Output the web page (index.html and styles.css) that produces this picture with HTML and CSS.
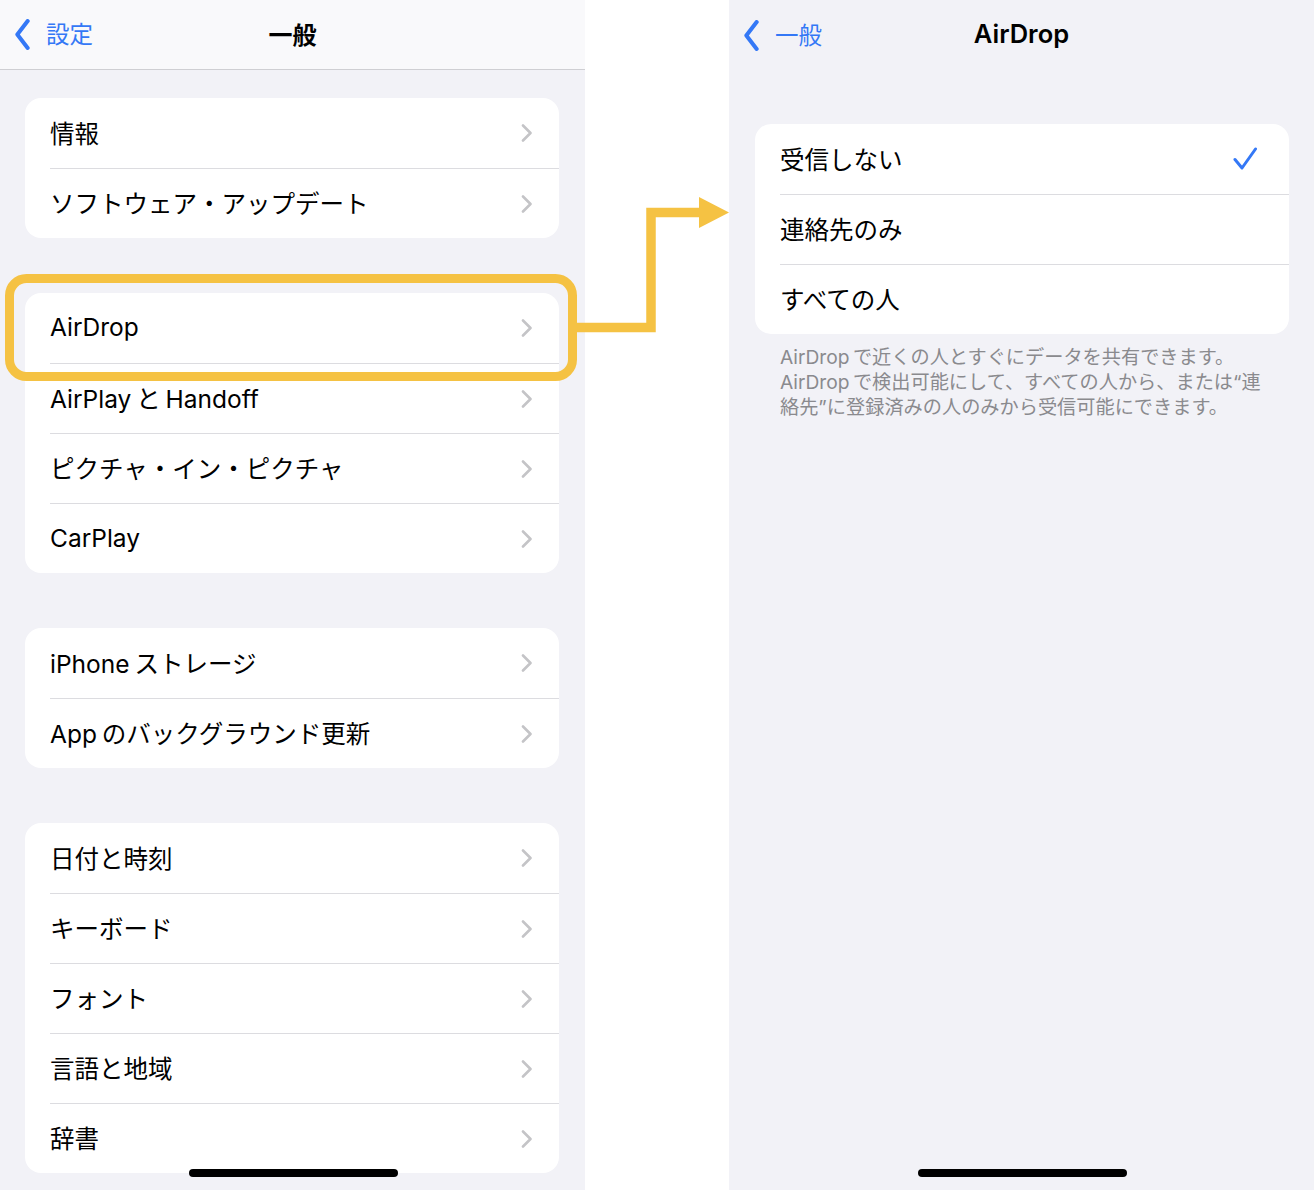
FILE: index.html
```html
<!DOCTYPE html>
<html lang="ja">
<head>
<meta charset="utf-8"/>
<title>一般 → AirDrop</title>
<link rel="stylesheet" href="styles.css">
</head>
<body>
<div class="page">

  <!-- Left: 一般 -->
  <div class="panel">
    <div class="navbar bordered">
      <a class="back"><svg class="back-ico" viewBox="0 0 16 30"><path d="M13 2 L3 15 L13 28"/></svg><span>設定</span></a>
      <div class="nav-title">一般</div>
      <div></div>
    </div>

    <div class="group">
      <div class="row"><span>情報</span><svg class="chev" viewBox="0 0 12 18"><path d="M2 1.5 L9.5 9 L2 16.5"/></svg></div>
      <div class="row"><span>ソフトウェア・アップデート</span><svg class="chev" viewBox="0 0 12 18"><path d="M2 1.5 L9.5 9 L2 16.5"/></svg></div>
    </div>

    <div class="group">
      <div class="row"><span>AirDrop</span><svg class="chev" viewBox="0 0 12 18"><path d="M2 1.5 L9.5 9 L2 16.5"/></svg></div>
      <div class="row"><span>AirPlay と Handoff</span><svg class="chev" viewBox="0 0 12 18"><path d="M2 1.5 L9.5 9 L2 16.5"/></svg></div>
      <div class="row"><span>ピクチャ・イン・ピクチャ</span><svg class="chev" viewBox="0 0 12 18"><path d="M2 1.5 L9.5 9 L2 16.5"/></svg></div>
      <div class="row"><span>CarPlay</span><svg class="chev" viewBox="0 0 12 18"><path d="M2 1.5 L9.5 9 L2 16.5"/></svg></div>
    </div>

    <div class="group">
      <div class="row"><span>iPhone ストレージ</span><svg class="chev" viewBox="0 0 12 18"><path d="M2 1.5 L9.5 9 L2 16.5"/></svg></div>
      <div class="row"><span>App のバックグラウンド更新</span><svg class="chev" viewBox="0 0 12 18"><path d="M2 1.5 L9.5 9 L2 16.5"/></svg></div>
    </div>

    <div class="group">
      <div class="row"><span>日付と時刻</span><svg class="chev" viewBox="0 0 12 18"><path d="M2 1.5 L9.5 9 L2 16.5"/></svg></div>
      <div class="row"><span>キーボード</span><svg class="chev" viewBox="0 0 12 18"><path d="M2 1.5 L9.5 9 L2 16.5"/></svg></div>
      <div class="row"><span>フォント</span><svg class="chev" viewBox="0 0 12 18"><path d="M2 1.5 L9.5 9 L2 16.5"/></svg></div>
      <div class="row"><span>言語と地域</span><svg class="chev" viewBox="0 0 12 18"><path d="M2 1.5 L9.5 9 L2 16.5"/></svg></div>
      <div class="row"><span>辞書</span><svg class="chev" viewBox="0 0 12 18"><path d="M2 1.5 L9.5 9 L2 16.5"/></svg></div>
    </div>

    <div class="home-bar"></div>
  </div>

  <div class="spacer"></div>

  <!-- Right: AirDrop -->
  <div class="panel">
    <div class="navbar">
      <a class="back"><svg class="back-ico" viewBox="0 0 16 30"><path d="M13 2 L3 15 L13 28"/></svg><span>一般</span></a>
      <div class="nav-title latin">AirDrop</div>
      <div></div>
    </div>

    <div class="group airdrop">
      <div class="row"><span>受信しない</span><svg class="check" viewBox="0 0 24 24"><path d="M2 12.5 L9 21 L22.5 2"/></svg></div>
      <div class="row"><span>連絡先のみ</span></div>
      <div class="row"><span>すべての人</span></div>
    </div>
    <p class="footnote">AirDrop で近くの人とすぐにデータを共有できます。<br>AirDrop で検出可能にして、すべての人から、または“連<br>絡先”に登録済みの人のみから受信可能にできます。</p>

    <div class="home-bar"></div>
  </div>

  <!-- Annotation -->
  <svg class="annotation" width="1314" height="1190" viewBox="0 0 1314 1190">
    <rect x="9.5" y="278.5" width="563" height="98" rx="17" fill="none" stroke="#f5c243" stroke-width="9"/>
    <path d="M572 327.5 H651 V212.5 H702" fill="none" stroke="#f5c243" stroke-width="9.5"/>
    <polygon points="699,197 729,212.5 699,228" fill="#f5c243"/>
  </svg>
</div>
</body>
</html>
```

FILE: styles.css
```css
/* ======== Reset ======== */
* {
  box-sizing: border-box;
  margin: 0;
  padding: 0;
}

body {
  background: #fff;
  font-family: "Inter", "Noto Sans CJK JP", sans-serif;
  color: #000;
}

.page {
  position: relative;
  display: flex;
  width: 1314px;
  height: 1190px;
  overflow: hidden;
}

/* ======== Panels ======== */
.panel {
  position: relative;
  width: 585px;
  height: 100%;
  background: #f2f2f7;
}

.spacer {
  width: 144px;
  background: #fff;
}

/* ======== Nav bar ======== */
.navbar {
  display: grid;
  grid-template-columns: 1fr auto 1fr;
  align-items: center;
  height: 70px;
  padding: 0 14px 3px;
}

.navbar.bordered {
  background: #f9f9fb;
  border-bottom: 1px solid #cfcfd3;
}

.back {
  display: flex;
  align-items: center;
  gap: 15px;
  color: #3478f6;
  font-size: 23.5px;
  text-decoration: none;
}

.back-ico {
  width: 17px;
  height: 31px;
  margin-top: 3px;
  fill: none;
  stroke: #3478f6;
  stroke-width: 3.9;
  stroke-linecap: round;
  stroke-linejoin: round;
}

.nav-title {
  font-size: 24px;
  font-weight: 600;
}

.nav-title.latin { font-size: 25.5px; }

/* ======== Groups & rows ======== */
.group {
  margin: 28px 26px 0 25px;
  background: #fff;
  border-radius: 16px;
  overflow: hidden;
}

.group + .group { margin-top: 55px; }

.row {
  display: flex;
  justify-content: space-between;
  align-items: center;
  height: 70px;
  margin-left: 25px;
  padding-right: 26px;
  font-size: 24.5px;
  word-spacing: -2px;
}

.row span { margin-bottom: 2px; }

.row + .row { border-top: 1px solid #dcdce0; }

.chev {
  width: 12px;
  height: 18px;
  fill: none;
  stroke: #c4c4c7;
  stroke-width: 2.6;
  stroke-linecap: round;
  stroke-linejoin: round;
}

/* ======== AirDrop screen ======== */
.group.airdrop {
  margin: 54px 25px 0 26px;
}

.airdrop .row { padding-right: 32px; }

.check {
  width: 24px;
  height: 24px;
  fill: none;
  stroke: #3478f6;
  stroke-width: 3;
  stroke-linecap: round;
  stroke-linejoin: round;
}

.footnote {
  padding: 11px 20px 0 51px;
  font-size: 19.2px;
  line-height: 25px;
  word-spacing: -2px;
  white-space: nowrap;
  color: #8a8a8e;
}

/* ======== Home indicator & annotation ======== */
.home-bar {
  position: absolute;
  left: 189px;
  top: 1169px;
  width: 209px;
  height: 8px;
  background: #000;
  border-radius: 4px;
}

.annotation {
  position: absolute;
  left: 0;
  top: 0;
  pointer-events: none;
}
```
